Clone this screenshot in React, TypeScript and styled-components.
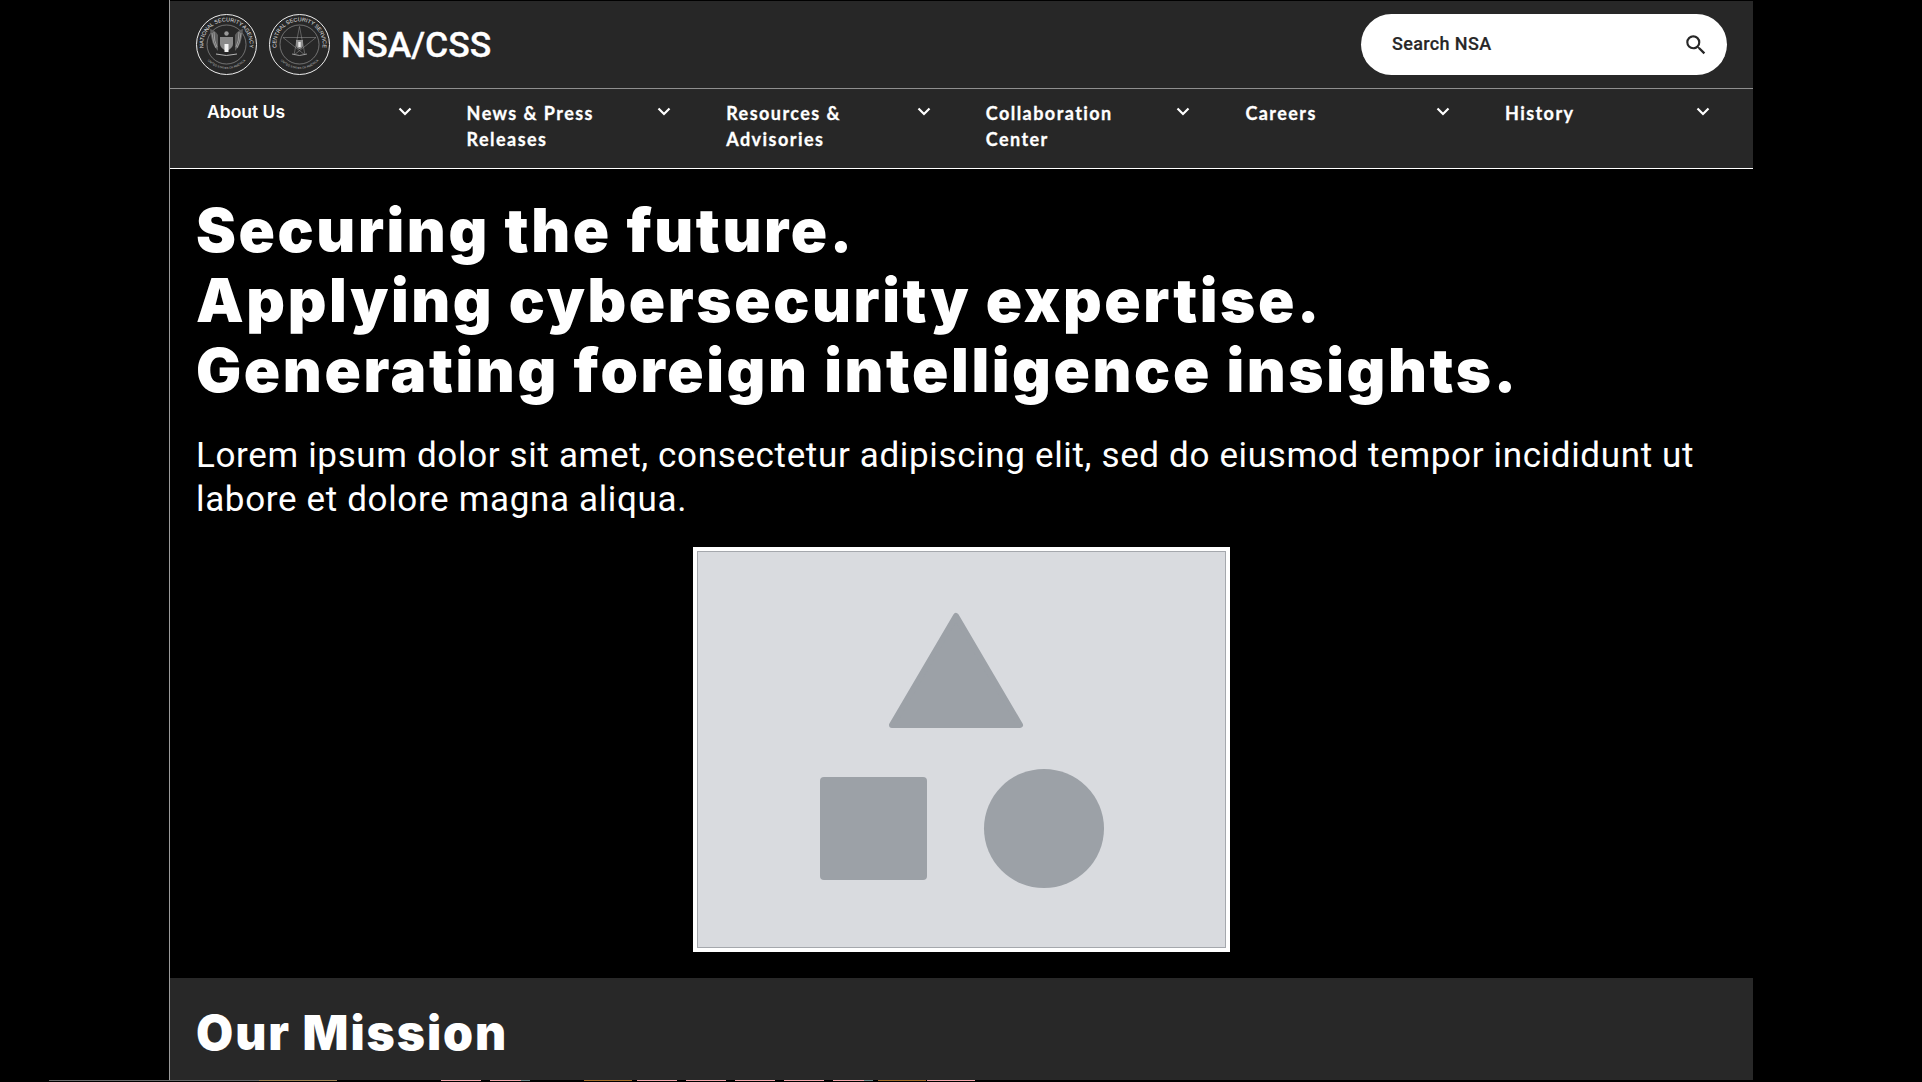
import React from "react";
import styled, { createGlobalStyle } from "styled-components";

const Global = createGlobalStyle`
  html, body { margin: 0; padding: 0; background: #000; overflow: hidden; }
  * { box-sizing: border-box; }
`;

const Screen = styled.div`
  height: 1082px;
  display: flex;
  flex-direction: column;
  background: #000;
  overflow: hidden;
`;

const Wrapper = styled.div`
  width: 1584px;
  height: 1080px;
  flex: none;
  margin: 0 0 0 169px;
  border-left: 1px solid #9a9a9a;
  padding-top: 1px;
  overflow: hidden;
`;

const Header = styled.header`
  background: #272727;
  border-bottom: 1px solid #fff;
`;

const TopBar = styled.div`
  height: 88px;
  display: flex;
  align-items: center;
  justify-content: space-between;
  padding: 0 26px;
  border-bottom: 1px solid #8f8f8f;
`;

const Brand = styled.div`
  display: flex;
  align-items: center;
  gap: 12px;
`;

const BrandTitle = styled.span`
  font: 500 35.5px "Roboto", sans-serif;
  -webkit-text-stroke: 0.3px #fff;
  color: #fff;
  margin-left: -1px;
`;

const Search = styled.div`
  width: 366px;
  height: 61px;
  border-radius: 31px;
  background: #fff;
  display: flex;
  align-items: center;
  justify-content: space-between;
  padding: 0 18px 0 31px;
`;

const SearchLabel = styled.span`
  font: 500 18px "Roboto", sans-serif;
  -webkit-text-stroke: 0.2px #272727;
  letter-spacing: 0.35px;
  color: #272727;
  margin-top: -2px;
`;

const Nav = styled.nav`
  height: 79px;
  display: grid;
  grid-template-columns: repeat(6, 259.6px);
  padding-left: 26px;
`;

const NavItem = styled.div`
  display: flex;
  align-items: flex-start;
  justify-content: space-between;
  padding: 11px 44px 0 11px;
`;

const NavLabel = styled.span<{ $first?: boolean }>`
  width: 165px;
  font: ${(p) => (p.$first ? '600 17.5px/23px "Inter"' : '700 18px/26px "Lato"')}, sans-serif;
  letter-spacing: ${(p) => (p.$first ? "0" : "1.45px")};
  -webkit-text-stroke: ${(p) => (p.$first ? "0" : "0.3px #fff")};
  color: #fff;
`;

const Chevron = styled.svg`
  flex: none;
  margin-top: 7px;
`;

const Hero = styled.main`
  padding: 26px 26px 0;
`;

const Title = styled.h1`
  margin: 0;
  font: 900 60px/70px "Inter", sans-serif;
  letter-spacing: 2.6px;
  color: #fff;
`;

const Lead = styled.p`
  margin: 29px 0 0;
  font: 400 35px/44px "Roboto", sans-serif;
  letter-spacing: 0.65px;
  color: #fff;
`;

const Figure = styled.div`
  width: 537px;
  height: 405px;
  margin: 25px auto 0;
  border: 4px solid #fff;
  outline: 1px solid #a5a8ad;
  outline-offset: -5px;
`;

const Placeholder = styled.svg`
  display: block;
  width: 100%;
  height: 100%;
`;

const Mission = styled.section`
  height: 120px;
  margin-top: 26px;
  padding: 23px 26px 0;
  background: #282828;
`;

const MissionTitle = styled.h2`
  margin: 0;
  font: 900 48px/64px "Inter", sans-serif;
  letter-spacing: 1.95px;
  color: #fff;
`;

const Strip = styled.div`
  height: 1px;
  flex: none;
  display: flex;
`;

const Segment = styled.span<{ $w: number; $c: string }>`
  flex: none;
  width: ${(p) => p.$w}px;
  height: 1px;
  background: ${(p) => p.$c};
`;

const navItems = ["About Us", "News & Press Releases", "Resources & Advisories", "Collaboration Center", "Careers", "History"];

const segments: [number, string][] = [
  [49, "#000"], [210, "#6a6a6a"], [78, "#a08455"], [104, "#000"], [40, "#f4a7ad"], [9, "#000"], [31, "#f4a7ad"],
  [9, "#6f8a8a"], [54, "#000"], [48, "#a66f2c"], [5, "#000"], [40, "#f4a7ad"], [9, "#000"], [40, "#f4a7ad"], [9, "#000"],
  [40, "#f4a7ad"], [9, "#000"], [40, "#f4a7ad"], [9, "#000"], [31, "#f4a7ad"], [9, "#6f8a8a"], [5, "#000"], [48, "#a66f2c"],
  [1, "#000"], [48, "#f4a7ad"],
];

function Seal({ id, top, bottom, star }: { id: string; top: string; bottom: string; star?: boolean }) {
  return (
    <svg width="61" height="61" viewBox="0 0 61 61" fill="none" stroke="#ededed">
      <circle cx="30.5" cy="30.5" r="30" strokeWidth="1" />
      <circle cx="30.5" cy="30.5" r="19.500" strokeWidth="0.5" stroke="#bdbdbd" />
      <defs>
        <path id={id + "t"} d="M12.800 45.500A23.200 23.200 0 1 1 48.200 45.500" />
        <path id={id + "b"} d="M12 47A25.500 25.500 0 0 0 49 47" />
      </defs>
      <text fontFamily="Liberation Sans" fontSize="5.400" fill="#e4e4e4" stroke="none" textAnchor="middle">
        <textPath href={`#${id}t`} startOffset="50%">{top}</textPath>
      </text>
      <text fontFamily="Liberation Sans" fontSize="3" fill="#bbb" stroke="none" textAnchor="middle">
        <textPath href={`#${id}b`} startOffset="50%">{bottom}</textPath>
      </text>
      {star ? (
        <g>
          <path d="M30.500 12.500 36 41 14 23.500 47 23.500 25 41Z" strokeWidth="0.5" stroke="#9a9a9a" />
          <path d="M27 26h7v5q0 3-3.500 4-3.500-1-3.500-4z" fill="#8f8f8f" stroke="none" />
          <path d="M29.300 28h2.400v5h-2.400z" fill="#e8e8e8" stroke="none" />
          <path d="M23 40q7.500 3 15 0" strokeWidth="0.9" stroke="#a0a0a0" />
        </g>
      ) : (
        <g>
          <path d="M14 15q5 1 8 6v16q-7-6-8-22ZM47 15q-5 1-8 6v16q7-6 8-22Z" fill="#5e5e5e" stroke="none" />
          <path d="M16 19q1 10 4 15M18 18q0 9 3 15M45 19q-1 10-4 15M43 18q0 9-3 15" strokeWidth="0.5" stroke="#d8d8d8" />
          <path d="M24 23h13v7q0 4-6.500 7-6.500-3-6.500-7z" fill="#8a8a8a" stroke="none" />
          <path d="M28.500 30h4v8h-4z" fill="#f4f4f4" stroke="none" />
          <circle cx="30.500" cy="19.500" r="2.200" fill="#9a9a9a" stroke="none" />
          <path d="M20 40q10 3 21 0" strokeWidth="0.9" stroke="#c5c5c5" />
        </g>
      )}
    </svg>
  );
}

export default function App() {
  return (
    <Screen>
      <Global />
      <Wrapper>
        <Header>
          <TopBar>
            <Brand>
              <Seal id="nsa" top="NATIONAL SECURITY AGENCY" bottom="UNITED STATES OF AMERICA" />
              <Seal id="css" top="CENTRAL SECURITY SERVICE" bottom="UNITED STATES OF AMERICA" star />
              <BrandTitle>NSA/CSS</BrandTitle>
            </Brand>
            <Search>
              <SearchLabel>Search NSA</SearchLabel>
              <svg width="26" height="26" viewBox="0 0 24 24" fill="#272727">
                <path d="M15.500 14h-.79l-.28-.27A6.470 6.470 0 0 0 16 9.500 6.500 6.500 0 1 0 9.500 16c1.610 0 3.090-.59 4.230-1.570l.27.28v.79l5 4.990L20.490 19l-4.990-5zm-6 0C7.010 14 5 11.990 5 9.500S7.010 5 9.500 5 14 7.010 14 9.500 11.990 14 9.500 14z" />
              </svg>
            </Search>
          </TopBar>
          <Nav>
            {navItems.map((item, i) => (
              <NavItem key={item}>
                <NavLabel $first={i === 0}>{item}</NavLabel>
                <Chevron width="14" height="10" viewBox="0 0 14 10" fill="none" stroke="#fff" strokeWidth="2.200">
                  <path d="M1.500 1.500 7 7l5.500-5.500" />
                </Chevron>
              </NavItem>
            ))}
          </Nav>
        </Header>
        <Hero>
          <Title>
            Securing the future.
            <br />
            Applying cybersecurity expertise.
            <br />
            Generating foreign intelligence insights.
          </Title>
          <Lead>Lorem ipsum dolor sit amet, consectetur adipiscing elit, sed do eiusmod tempor incididunt ut labore et dolore magna aliqua.</Lead>
          <Figure>
            <Placeholder viewBox="0 0 529 397" preserveAspectRatio="none">
              <rect width="529" height="397" fill="#d9dbdf" />
              <path d="M259 65 323 174H195Z" fill="#9ca1a7" stroke="#9ca1a7" strokeWidth="6" strokeLinejoin="round" />
              <rect x="123" y="226" width="107" height="103" rx="4" fill="#9ca1a7" />
              <ellipse cx="347" cy="277.500" rx="60" ry="59.500" fill="#9ca1a7" />
            </Placeholder>
          </Figure>
        </Hero>
        <Mission>
          <MissionTitle>Our Mission</MissionTitle>
        </Mission>
      </Wrapper>
      <Strip>
        {segments.map(([w, c], i) => (
          <Segment key={i} $w={w} $c={c} />
        ))}
      </Strip>
    </Screen>
  );
}
